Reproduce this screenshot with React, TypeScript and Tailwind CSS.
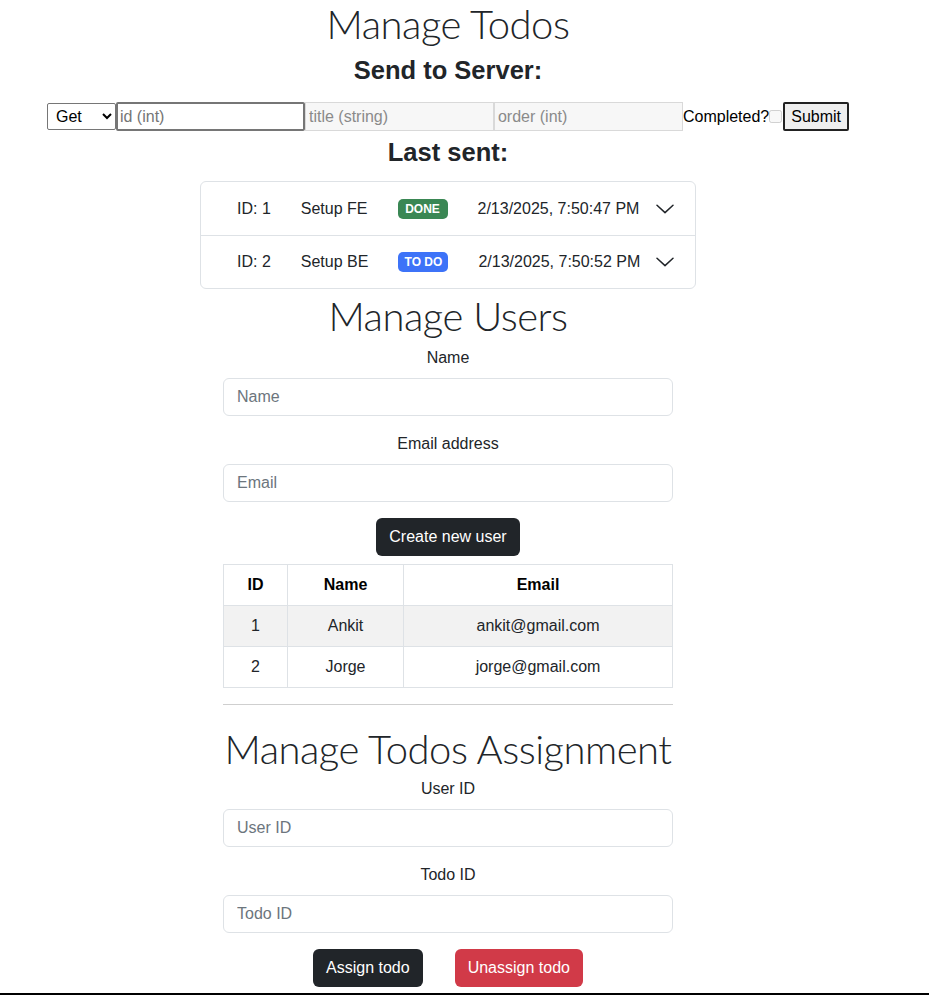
import { useState } from 'react'

const sans = { fontFamily: '"Liberation Sans", Arial, sans-serif' }
const light = { fontFamily: 'Lato, "Liberation Sans", sans-serif' }

function Chevron() {
  return (
    <svg width="18" height="10" viewBox="0 0 18 10" fill="none" className="shrink-0">
      <path d="M1 1.2 L9 8.6 L17 1.2" stroke="#212529" strokeWidth="1.5" strokeLinecap="round" strokeLinejoin="round" />
    </svg>
  )
}

const todos = [
  { id: 1, title: 'Setup FE', done: true, date: '2/13/2025, 7:50:47 PM' },
  { id: 2, title: 'Setup BE', done: false, date: '2/13/2025, 7:50:52 PM' },
]

const users = [
  { id: 1, name: 'Ankit', email: 'ankit@gmail.com' },
  { id: 2, name: 'Jorge', email: 'jorge@gmail.com' },
]

function Field({ label, placeholder }: { label: string; placeholder: string }) {
  return (
    <div className="flex flex-col items-center">
      <label className="text-[16px] leading-6 text-[#212529] mb-2">{label}</label>
      <input
        placeholder={placeholder}
        className="w-[450px] h-[38px] px-[13px] rounded-[6px] border border-[#dee2e6] text-[16px] text-[#212529] placeholder:text-[#6c757d] bg-white outline-none"
      />
    </div>
  )
}

export default function App() {
  const [method, setMethod] = useState('Get')

  return (
    <div className="min-h-[995px] w-[929px] bg-white text-[#212529] flex flex-col" style={sans}>
      <div className="w-[896px] flex flex-col items-center">
        <h1 className="font-light text-[40px] leading-[48px] tracking-[-0.5px]" style={light}>Manage Todos</h1>
        <h2 className="font-bold text-[25.5px] leading-[29px] mt-[8px]">Send to Server:</h2>

        <div className="flex items-center mt-[17px] text-[16px] whitespace-nowrap">
          <select
            value={method}
            onChange={(e) => setMethod(e.target.value)}
            className="w-[69px] h-[27px] border border-[#767676] rounded-[2px] bg-white text-black text-[16px] pl-[4px]"
          >
            <option>Get</option>
            <option>Post</option>
            <option>Put</option>
            <option>Delete</option>
          </select>
          <input placeholder="id (int)" className="w-[189px] h-[29px] border-2 border-[#767676] rounded-[2px] px-[2px] text-[16px] placeholder:text-[#757575] outline-none" />
          <input disabled placeholder="title (string)" className="w-[189px] h-[29px] border border-[#d9d9d9] bg-[#f7f7f7] px-[3px] text-[16px] placeholder:text-[#8a8a8a]" />
          <input disabled placeholder="order (int)" className="w-[189px] h-[29px] border border-[#d9d9d9] bg-[#f7f7f7] px-[3px] text-[16px] placeholder:text-[#8a8a8a]" />
          <span className="text-black">Completed?</span>
          <input type="checkbox" disabled className="w-[13px] h-[13px] m-0 mr-[1px]" />
          <button className="h-[29px] px-[6px] border-2 border-[#222] bg-[#efefef] text-black text-[16px] rounded-[2px]">Submit</button>
        </div>

        <h2 className="font-bold text-[25.5px] leading-[29px] mt-[7px]">Last sent:</h2>

        <div className="w-[496px] mt-[14px] border border-[#dee2e6] rounded-[6px] overflow-hidden">
          {todos.map((t, i) => (
            <div key={t.id} className={`h-[53px] flex items-center pl-[36px] pr-[21px] text-[16px] whitespace-nowrap ${i > 0 ? 'border-t border-[#dee2e6]' : ''}`}>
              <span className="shrink-0">ID: {t.id}</span>
              <span className="ml-[30px] shrink-0">{t.title}</span>
              <span
                className={`ml-[30px] shrink-0 inline-flex items-center justify-center h-[20px] w-[50px] rounded-[5px] text-white text-[12px] font-bold ${
                  t.done ? 'bg-[#3a8754]' : 'bg-[#3d73f8]'
                }`}
              >
                {t.done ? 'DONE' : 'TO DO'}
              </span>
              <span className="ml-[30px] shrink-0">{t.date}</span>
              <span className="ml-auto pl-[12px]"><Chevron /></span>
            </div>
          ))}
        </div>

        <h1 className="font-light text-[40px] leading-[48px] mt-[3px] tracking-[-0.5px]" style={light}>Manage Users</h1>

        <div className="flex flex-col items-center gap-[16px] mt-[6px]">
          <Field label="Name" placeholder="Name" />
          <Field label="Email address" placeholder="Email" />
        </div>

        <button className="mt-[16px] h-[38px] px-[13px] rounded-[6px] bg-[#212529] text-white text-[16px]">Create new user</button>

        <table className="mt-[8px] w-[450px] border-collapse text-[16px] text-black text-center">
          <thead>
            <tr className="h-[41px]">
              <th className="w-[64px] border border-[#dee2e6] font-bold">ID</th>
              <th className="w-[116px] border border-[#dee2e6] font-bold">Name</th>
              <th className="border border-[#dee2e6] font-bold">Email</th>
            </tr>
          </thead>
          <tbody>
            {users.map((u, i) => (
              <tr key={u.id} className={`h-[41px] ${i === 0 ? 'bg-[#f2f2f2]' : 'bg-white'}`}>
                <td className="border border-[#dee2e6] text-[#212529]">{u.id}</td>
                <td className="border border-[#dee2e6] text-[#212529]">{u.name}</td>
                <td className="border border-[#dee2e6] text-[#212529]">{u.email}</td>
              </tr>
            ))}
          </tbody>
        </table>

        <hr className="w-[450px] mt-[16px] border-0 border-t border-[#cfcfcf]" />

        <h1 className="font-light text-[40px] leading-[48px] mt-[20px] tracking-[-0.5px]" style={light}>Manage Todos Assignment</h1>

        <div className="flex flex-col items-center gap-[16px] mt-[4px]">
          <Field label="User ID" placeholder="User ID" />
          <Field label="Todo ID" placeholder="Todo ID" />
        </div>

        <div className="flex gap-[32px] mt-[16px]">
          <button className="h-[38px] px-[13px] rounded-[6px] bg-[#212529] text-white text-[16px]">Assign todo</button>
          <button className="h-[38px] px-[13px] rounded-[6px] bg-[#d13a48] text-white text-[16px]">Unassign todo</button>
        </div>
      </div>

      <div className="w-full mt-auto h-[2px] bg-black" />
    </div>
  )
}
